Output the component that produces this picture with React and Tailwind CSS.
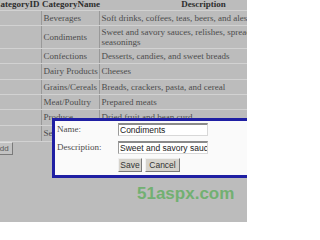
import React from 'react';

const ROWS = [
  { name: 'Beverages', desc: 'Soft drinks, coffees, teas, beers, and ales', h: 'h-[15px]' },
  { name: 'Condiments', desc: 'Sweet and savory sauces, relishes, spreads, and seasonings', h: 'h-[23px]' },
  { name: 'Confections', desc: 'Desserts, candies, and sweet breads', h: 'h-[15px]' },
  { name: 'Dairy Products', desc: 'Cheeses', h: 'h-[16px]' },
  { name: 'Grains/Cereals', desc: 'Breads, crackers, pasta, and cereal', h: 'h-[15px]' },
  { name: 'Meat/Poultry', desc: 'Prepared meats', h: 'h-[15px]' },
  { name: 'Produce', desc: 'Dried fruit and bean curd', h: 'h-[16px]' },
  { name: 'Seafood', desc: 'Seaweed and fish', h: 'h-[16px]' },
];

const App = () => {
  return (
    <div className="relative w-[247px] h-[222px] overflow-hidden bg-[#bcbcbc] font-['Liberation_Serif',serif] text-[9px] text-[#4c4c4c]">
      {/* Grid */}
      <table className="ml-[-8px] w-[316px] table-fixed border-collapse">
        <colgroup>
          <col className="w-[49px]" />
          <col className="w-[58px]" />
          <col className="w-[209px]" />
        </colgroup>
        <thead>
          <tr className="h-[10px]">
            <th className="border-b border-[#d2d2d2] px-0 text-left font-bold leading-[9px] text-[#2e2e2e] whitespace-nowrap">
              <span className="ml-[2px]">CategoryID</span>
            </th>
            <th className="border-b border-[#d2d2d2] pl-px text-left font-bold leading-[9px] text-[#2e2e2e] whitespace-nowrap">
              CategoryName
            </th>
            <th className="border-b border-[#d2d2d2] text-center font-bold leading-[9px] text-[#2e2e2e]">
              Description
            </th>
          </tr>
        </thead>
        <tbody>
          {ROWS.map(r => (
            <tr key={r.name} className={r.h}>
              <td className="border-b border-b-[#d2d2d2] border-r border-r-[#999999]"></td>
              <td className="border-b border-b-[#d2d2d2] border-r border-r-[#999999] pl-[2px] leading-[10px] whitespace-nowrap">{r.name}</td>
              <td className="border-b border-b-[#d2d2d2] pl-[2px] leading-[10px]">{r.desc}</td>
            </tr>
          ))}
        </tbody>
      </table>

      <button className="ml-[-10px] w-[23px] h-[13px] bg-[#c2c2c2] border border-t-[#dedede] border-l-[#dedede] border-b-[#7a7a7a] border-r-[#7a7a7a] font-['Liberation_Sans',sans-serif] text-[8px] text-[#5a5a5a] leading-none">
        Add
      </button>

      {/* Edit popup */}
      <div className="absolute left-[52px] top-[118px] w-[220px] h-[60px] border-[3px] border-[#1f1fa3] bg-[#fafafa]">
        <div className="flex flex-col gap-[4px] pl-[2px] pt-[2px]">
          <div className="flex items-center">
            <span className="w-[61px]">Name:</span>
            <div className="w-[90px] h-[13px] bg-white border-t-2 border-l border-b border-r border-t-[#8a8a8a] border-l-[#9a9a9a] border-b-[#d8d8d8] border-r-[#d8d8d8] font-['Liberation_Sans',sans-serif] text-[8.5px] text-[#222] leading-[10px] pl-px overflow-hidden whitespace-nowrap">
              Condiments
            </div>
          </div>
          <div className="flex items-center">
            <span className="w-[61px]">Description:</span>
            <div className="w-[90px] h-[13px] bg-white border-t-2 border-l border-b border-r border-t-[#8a8a8a] border-l-[#9a9a9a] border-b-[#d8d8d8] border-r-[#d8d8d8] font-['Liberation_Sans',sans-serif] text-[8.5px] text-[#222] leading-[10px] pl-px overflow-hidden whitespace-nowrap">
              Sweet and savory sauces, relishes
            </div>
          </div>
          <div className="flex gap-[3px] ml-[61px]">
            <button className="w-[24px] h-[14px] bg-[#d6d3cc] border border-t-[#f0f0f0] border-l-[#f0f0f0] border-b-[#7a7a7a] border-r-[#7a7a7a] font-['Liberation_Sans',sans-serif] text-[8.5px] text-[#333] leading-none">
              Save
            </button>
            <button className="w-[35px] h-[14px] bg-[#d6d3cc] border border-t-[#f0f0f0] border-l-[#f0f0f0] border-b-[#7a7a7a] border-r-[#7a7a7a] font-['Liberation_Sans',sans-serif] text-[8.5px] text-[#333] leading-none">
              Cancel
            </button>
          </div>
        </div>
      </div>

      {/* Watermark */}
      <div className="absolute left-[137px] top-[185px] font-['Liberation_Sans',sans-serif] font-bold text-[17px] leading-none text-[#72b072]">
        51aspx.com
      </div>
    </div>
  );
};

export default App;
